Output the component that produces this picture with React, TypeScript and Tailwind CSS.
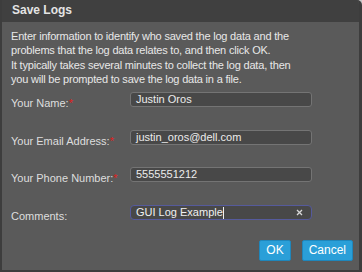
export default function App() {
  const fields = [
    { label: 'Your Name:', value: 'Justin Oros', mt: 'mt-[6px]' },
    { label: 'Your Email Address:', value: 'justin_oros@dell.com', mt: 'mt-[20px]' },
    { label: 'Your Phone Number:', value: '5555551212', mt: 'mt-[19px]' },
  ];

  return (
    <div className="w-[362px] h-[272px] bg-[#c8c8c8] font-['Liberation_Sans',Arial,sans-serif] text-[11px] text-[#e6e6e6]">
      <div className="flex flex-col w-[362px] h-[272px] bg-[#5a5a5a] border-l-2 border-r-[3px] border-b-2 border-[#3d3d3d] rounded-tr-[5px] overflow-hidden">
        <div className="h-[22px] shrink-0 bg-[#404040] pl-[10px] pt-[3px] text-[12px] leading-[14px] font-bold text-[#e4e4e4]">
          Save Logs
        </div>
        <p className="pl-[9px] pt-[7px] leading-[14.3px] tracking-[-0.2px] text-[#e8e8e8]">
          Enter information to identify who saved the log data and the
          <br />
          problems that the log data relates to, and then click OK.
          <br />
          It typically takes several minutes to collect the log data, then
          <br />
          you will be prompted to save the log data in a file.
        </p>
        <div className="flex flex-col pl-[9px]">
          {fields.map((f) => (
            <div key={f.label} className={`flex items-start ${f.mt}`}>
              <div className="w-[119px] pt-[5px] leading-[13px] text-[#dedede]">
                {f.label}
                <span className="text-[#e0201c]">*</span>
              </div>
              <div className="w-[182px] h-[15px] bg-[#484848] border border-[#747474] rounded-[3px] px-[5px] leading-[13px] text-[#ececec]">
                {f.value}
              </div>
            </div>
          ))}
          <div className="flex items-start mt-[20px]">
            <div className="w-[119px] pt-[5px] leading-[13px] text-[#dedede]">Comments:</div>
            <div className="flex items-center w-[182px] h-[15px] bg-[#484848] border border-[#555a9c] rounded-[4px] pl-[5px] pr-[8px] leading-[13px] text-[#f0f0f0]">
              <span>GUI Log Example</span>
              <span className="w-px h-[12px] bg-[#f0f0f0]" />
              <svg className="ml-auto" width="7" height="7" viewBox="0 0 7 7">
                <path d="M1 1L6 6M6 1L1 6" stroke="#d8d8d8" strokeWidth="1.3" />
              </svg>
            </div>
          </div>
        </div>
        <div className="flex justify-end gap-[11px] pr-[6px] mt-auto mb-[9px]">
          <button className="h-[21px] px-[6px] bg-[#2a9fd8] border border-[#1f86bb] rounded-[2px] text-[12px] leading-[19px] text-white">
            OK
          </button>
          <button className="h-[21px] px-[6px] bg-[#2a9fd8] border border-[#1f86bb] rounded-[2px] text-[12px] leading-[19px] text-white">
            Cancel
          </button>
        </div>
      </div>
    </div>
  );
}
